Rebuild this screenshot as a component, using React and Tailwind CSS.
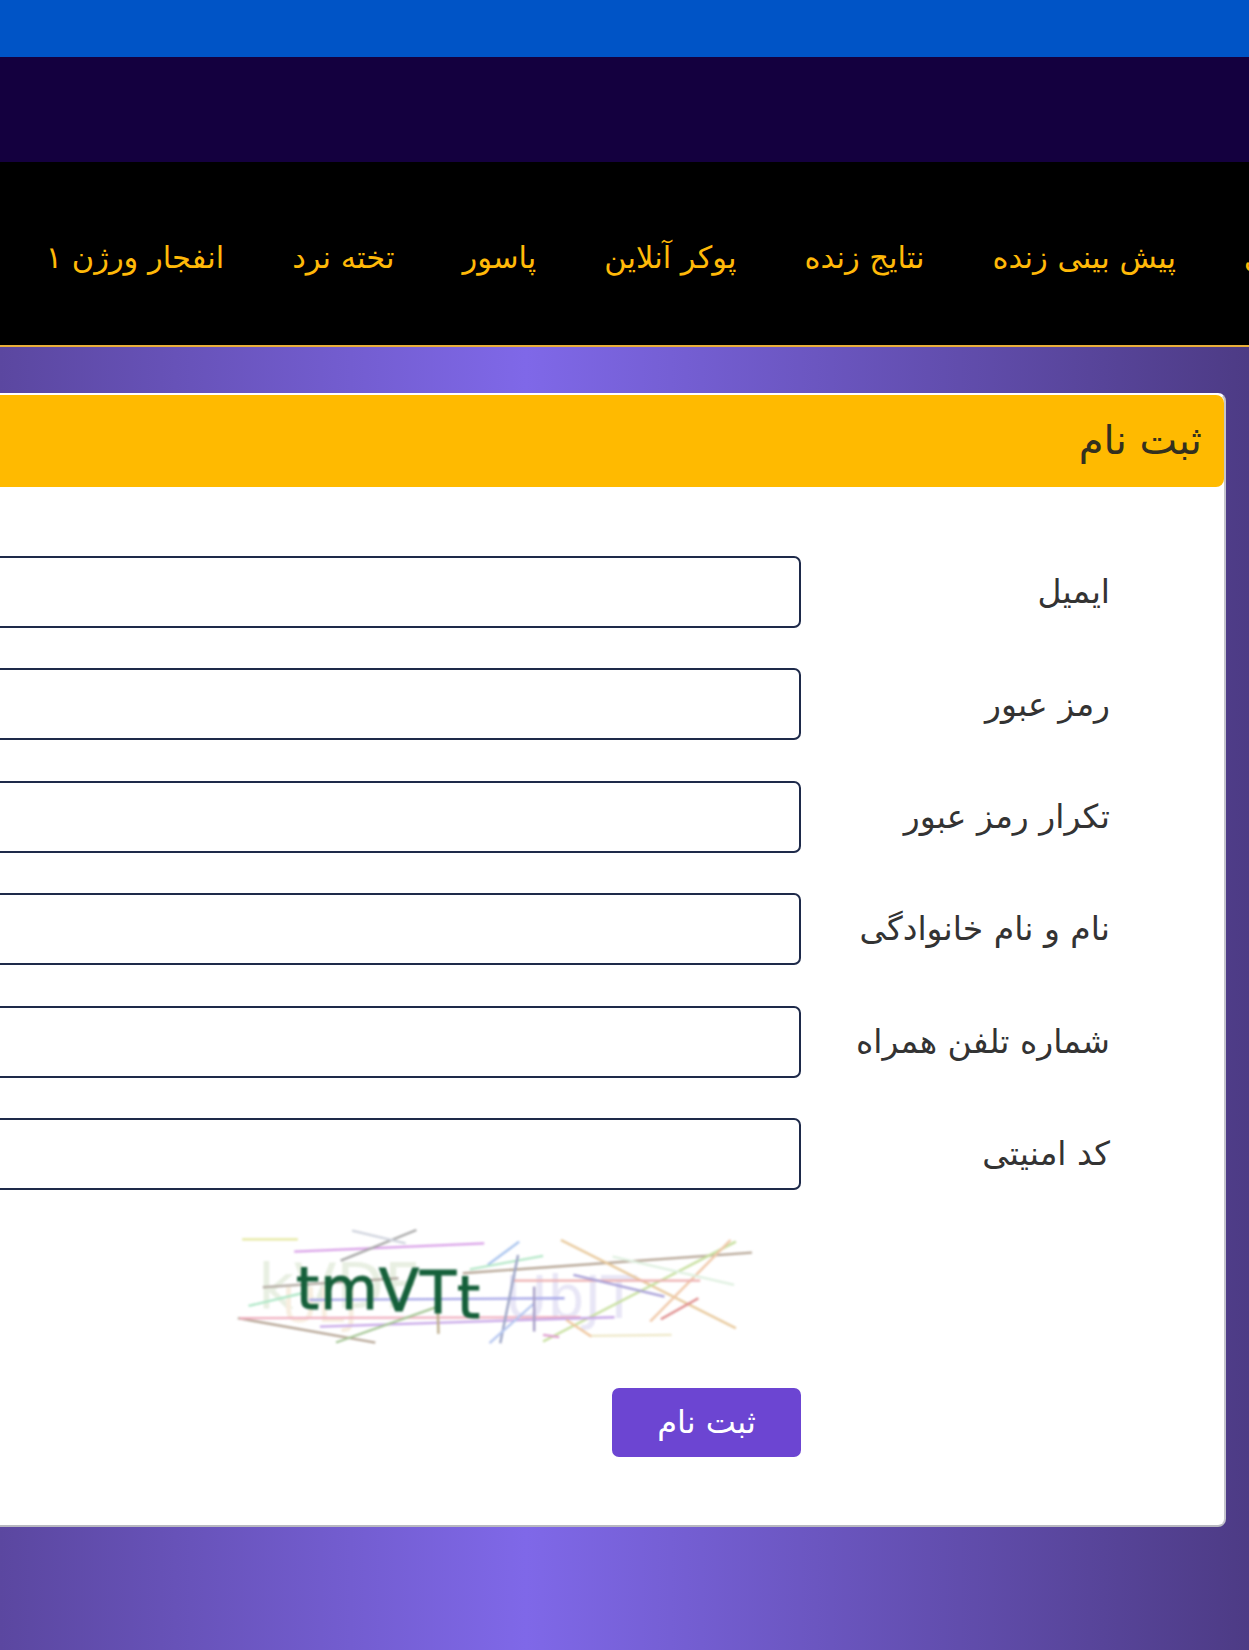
import React from 'react';

const navItems = ['صفحه اصلی', 'پیش بینی زنده', 'نتایج زنده', 'پوکر آنلاین', 'پاسور', 'تخته نرد', 'انفجار ورژن ۱'];
const fields = ['ایمیل', 'رمز عبور', 'تکرار رمز عبور', 'نام و نام خانوادگی', 'شماره تلفن همراه', 'کد امنیتی'];

// captcha noise, coordinates read off the zoomed crop
const noise = [
  [62, 88, 218, 88, '#e5e8a0'],
  [208, 125, 740, 100, '#d9a0e8'],
  [338, 152, 550, 60, '#a8a8a8'],
  [370, 62, 520, 100, '#d0d4de'],
  [750, 165, 838, 95, '#a9c4ee'],
  [700, 178, 905, 138, '#b5e8c8'],
  [680, 190, 1490, 128, '#b8a898'],
  [955, 90, 1445, 355, '#e8c89a'],
  [905, 395, 1445, 95, '#c8e0a0'],
  [1205, 335, 1430, 90, '#f0c8a8'],
  [1235, 328, 1340, 265, '#e09090'],
  [820, 212, 1345, 212, '#eeb0b0'],
  [990, 195, 1245, 260, '#a8a0d8'],
  [250, 270, 965, 265, '#a8a8e8'],
  [80, 288, 230, 250, '#b0e8c8'],
  [50, 325, 435, 398, '#b8a898'],
  [55, 325, 1010, 322, '#f0b0c0'],
  [280, 350, 1105, 322, '#c8a8e8'],
  [325, 398, 610, 290, '#a8c898'],
  [610, 290, 612, 372, '#c0b090'],
  [835, 135, 785, 400, '#a0a8c8'],
  [755, 400, 880, 280, '#b8c8f0'],
  [880, 230, 880, 365, '#a8a0c8'],
  [905, 375, 950, 382, '#e0a0d0'],
  [1040, 378, 1265, 375, '#eee8c8'],
  [970, 330, 1040, 380, '#f0c8a0'],
  [120, 232, 500, 205, '#b8b0a8'],
  [1100, 140, 1440, 225, '#dff0e0'],
];

function Captcha() {
  return (
    <svg width="560" height="150" viewBox="0 0 560 150" className="block blur-[0.8px] [direction:ltr]">
      <text x="38" y="98" fontSize="62" fontFamily="DejaVu Sans" fill="#e8efe2">
        kVDF
      </text>
      <text x="62" y="112" fontSize="48" fontFamily="DejaVu Sans" fill="#f8eee0">
        ULJ
      </text>
      <text x="285" y="108" fontSize="58" fontFamily="DejaVu Sans" fill="#e8e6f6">
        UbJT
      </text>
      <g transform="scale(0.357 0.333)">
        {noise.map(([x1, y1, x2, y2, color], i) => (
          <line key={`noise-${i}`} x1={x1} y1={y1} x2={x2} y2={y2} stroke={color} strokeWidth="7" />
        ))}
      </g>
      <text
        x="76"
        y="99 99 101 103 108"
        fontSize="59"
        fontFamily="DejaVu Sans"
        letterSpacing="1"
        fill="#15603a"
        stroke="#15603a"
        strokeWidth="1"
      >
        tmVTt
      </text>
    </svg>
  );
}

export default function App() {
  return (
    <div
      dir="rtl"
      className="h-[1650px] overflow-hidden bg-[linear-gradient(90deg,#5b47a0_0%,#7f68e8_42.1%,#4d3b85_100%)] font-['DejaVu_Sans',sans-serif] text-[#333]"
    >
      <div className="h-[57px] bg-[#0054c6]" />
      <div className="h-[105px] bg-[#14003f]" />
      <nav className="h-[185px] overflow-hidden border-b-2 border-[#e8ae3a] bg-black">
        <ul className="-mr-[152px] flex h-full items-center gap-[68px] whitespace-nowrap pt-[8px] text-[30.5px] text-[#ffb908]">
          {navItems.map((item) => (
            <li key={item}>{item}</li>
          ))}
        </ul>
      </nav>

      <div className="mr-[23px] mt-[46px] h-[1134px] w-[1500px] rounded-[8px] border-r-2 border-b-2 border-t-2 border-r-[#c4c4cc] border-b-[#b8b8c0] border-t-white bg-white">
        <div className="flex h-[92px] items-center rounded-[8px] bg-[#ffba00] pb-[2px] pr-[22px] text-[40px] text-[#33301f]">
          ثبت نام
        </div>
        <form className="pt-[69px]">
          {fields.map((label) => (
            <div key={label} className="mb-[40.4px] flex h-[72px] items-center">
              <label className="w-[423px] shrink-0 pr-[114px] text-[33px]">{label}</label>
              <input className="h-[72px] w-[1000px] rounded-[7px] border-2 border-[#1e2a4a] bg-white" />
            </div>
          ))}
          <div className="-mt-[20px] mr-[444px]">
            <Captcha />
          </div>
          <button
            type="button"
            className="mr-[423px] mt-[28px] flex h-[69px] w-[189px] items-center justify-center rounded-[7px] bg-[#6c45d2] pb-[2px] text-[32px] text-white"
          >
            ثبت نام
          </button>
        </form>
      </div>
    </div>
  );
}
